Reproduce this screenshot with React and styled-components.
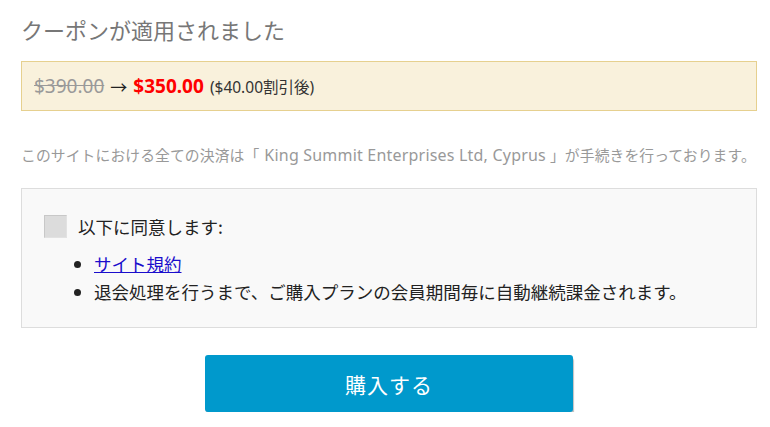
import React from "react";
import styled, { createGlobalStyle } from "styled-components";

const Global = createGlobalStyle`
  html, body { margin: 0; padding: 0; background: #fff; }
  body { font-family: "Noto Sans", "Noto Sans CJK JP", sans-serif; }
  * { box-sizing: border-box; }
`;

const Page = styled.div`
  padding: 16px 13px 0 21px;
  width: 770px;
  font-family: "Noto Sans", "Noto Sans CJK JP", sans-serif;
`;

const Title = styled.h2`
  margin: 0;
  font-size: 22px;
  line-height: 26px;
  font-weight: 400;
  color: #777;
  font-family: "Noto Sans CJK JP", sans-serif;
`;

const CouponBox = styled.div`
  margin-top: 19px;
  height: 50px;
  display: flex;
  align-items: center;
  padding: 0 12px;
  background: #f9f1dc;
  border: 1px solid #e6d08f;
  color: #333;
  font-size: 19px;
  white-space: nowrap;
`;

const OldPrice = styled.s`
  color: #999;
`;

const Arrow = styled.span`
  margin: 0 6px;
  color: #222;
  font-size: 17px;
`;

const NewPrice = styled.strong`
  color: #ff0000;
  font-weight: 700;
`;

const Discount = styled.span`
  margin-left: 6px;
  font-size: 15.5px;
  color: #333;
`;

const Notice = styled.p`
  margin: 34px 0 0;
  font-size: 14.8px;
  line-height: 20px;
  color: #999;
  white-space: nowrap;
  letter-spacing: 0.1px;
  font-family: "Noto Sans", "Noto Sans CJK JP", sans-serif;
`;

const Company = styled.span`
  font-size: 16px;
  letter-spacing: 0.2px;
  margin: 0 4px 0 5px;
`;

const AgreeBox = styled.div`
  margin-top: 23px;
  padding: 26px 22px 21px;
  background: #f9f9f9;
  border: 1px solid #ddd;
  font-family: "Noto Sans CJK JP", "Noto Sans", sans-serif;
  color: #222;
`;

const AgreeRow = styled.label`
  display: flex;
  align-items: center;
  gap: 11px;
  font-size: 17.5px;
  line-height: 23px;
`;

const CheckBox = styled.span`
  width: 23px;
  height: 23px;
  background: #dcdcdc;
  border: 1px solid #c8c8c8;
  border-right-color: #e2e2e2;
  border-bottom-color: #e2e2e2;
  flex: none;
`;

const List = styled.ul`
  margin: 12px 0 0;
  padding-left: 50px;
  font-size: 17.5px;
  line-height: 28px;
`;

const Item = styled.li``;

const Link = styled.a`
  color: #1a0dcc;
  text-decoration: underline;
`;

const ButtonWrap = styled.div`
  display: flex;
  justify-content: center;
  margin-top: 27px;
`;

const BuyButton = styled.button`
  width: 368px;
  height: 57px;
  border: none;
  border-radius: 3px;
  background: #0099cc;
  color: #fff;
  font-size: 21px;
  letter-spacing: 1px;
  font-family: "Noto Sans CJK JP", "Noto Sans", sans-serif;
  box-shadow: 1px 3px 1px rgba(0, 0, 0, 0.25);
  cursor: pointer;
`;

export default function App() {
  return (
    <>
      <Global />
      <Page>
        <Title>クーポンが適用されました</Title>
        <CouponBox>
          <OldPrice>$390.00</OldPrice>
          <Arrow>→</Arrow>
          <NewPrice>$350.00</NewPrice>
          <Discount>($40.00割引後)</Discount>
        </CouponBox>
        <Notice>
          このサイトにおける全ての決済は「<Company>King Summit Enterprises Ltd, Cyprus</Company>」が手続きを行っております。
        </Notice>
        <AgreeBox>
          <AgreeRow>
            <CheckBox />
            以下に同意します:
          </AgreeRow>
          <List>
            <Item>
              <Link href="#">サイト規約</Link>
            </Item>
            <Item>退会処理を行うまで、ご購入プランの会員期間毎に自動継続課金されます。</Item>
          </List>
        </AgreeBox>
        <ButtonWrap>
          <BuyButton>購入する</BuyButton>
        </ButtonWrap>
      </Page>
    </>
  );
}
